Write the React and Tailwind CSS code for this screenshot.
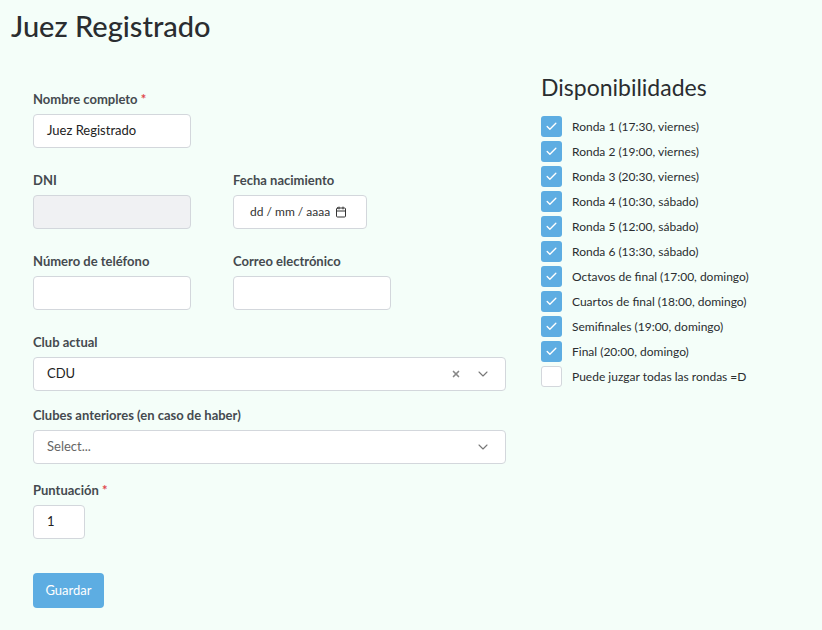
import React from 'react';
import { ChevronDown, X, Check, Calendar } from 'lucide-react';

const rondas = [
  ['Ronda 1 (17:30, viernes)', true],
  ['Ronda 2 (19:00, viernes)', true],
  ['Ronda 3 (20:30, viernes)', true],
  ['Ronda 4 (10:30, sábado)', true],
  ['Ronda 5 (12:00, sábado)', true],
  ['Ronda 6 (13:30, sábado)', true],
  ['Octavos de final (17:00, domingo)', true],
  ['Cuartos de final (18:00, domingo)', true],
  ['Semifinales (19:00, domingo)', true],
  ['Final (20:00, domingo)', true],
  ['Puede juzgar todas las rondas =D', false],
];

function Label({ children, required }) {
  return (
    <div className="text-[13px] font-bold text-[#454a4f] leading-[18px] mb-[6px]">
      {children}
      {required && <span className="text-[#e0474c]"> *</span>}
    </div>
  );
}

function Input({ className = '', disabled, children }) {
  return (
    <div className={`h-[34px] rounded-[4px] border border-[#d3d7dc] flex items-center px-[13px] text-[13px] text-[#222] ${disabled ? 'bg-[#f0f1f3]' : 'bg-white'} ${className}`}>
      {children}
    </div>
  );
}

export default function App() {
  return (
    <div className="min-h-[630px] bg-[#f4fef9] font-['Lato',sans-serif] text-[#222]">
      <h1 className="pl-[11px] pt-[8px] text-[29px] leading-[36px] font-medium text-[#2a2d30]">Juez Registrado</h1>

      <div className="flex pt-[46px]">
        {/* formulario */}
        <div className="pl-[33px] w-[507px]">
          <Label required>Nombre completo</Label>
          <Input className="w-[158px]">Juez Registrado</Input>

          <div className="flex mt-[23px]">
            <div className="w-[200px]">
              <Label>DNI</Label>
              <Input className="w-[158px]" disabled />
            </div>
            <div>
              <Label>Fecha nacimiento</Label>
              <Input className="w-[134px] justify-between pl-[16px] pr-[19px] text-[#333]">
                <span className="text-[12px]">dd / mm / aaaa</span>
                <Calendar className="w-[12px] h-[12px] text-[#333]" strokeWidth={2} />
              </Input>
            </div>
          </div>

          <div className="flex mt-[23px]">
            <div className="w-[200px]">
              <Label>Número de teléfono</Label>
              <Input className="w-[158px]" />
            </div>
            <div>
              <Label>Correo electrónico</Label>
              <Input className="w-[158px]" />
            </div>
          </div>

          <div className="mt-[23px]">
            <Label>Club actual</Label>
            <Input className="w-[473px] justify-between pr-[14px]">
              <span>CDU</span>
              <div className="flex items-center gap-[14px] text-[#888]">
                <X className="w-[10px] h-[10px]" strokeWidth={4} />
                <ChevronDown className="w-[16px] h-[16px] text-[#777]" strokeWidth={1.6} />
              </div>
            </Input>
          </div>

          <div className="mt-[15px]">
            <Label>Clubes anteriores (en caso de haber)</Label>
            <Input className="w-[473px] justify-between pr-[14px]">
              <span className="text-[#666]">Select...</span>
              <ChevronDown className="w-[16px] h-[16px] text-[#777]" strokeWidth={1.6} />
            </Input>
          </div>

          <div className="mt-[17px]">
            <Label required>Puntuación</Label>
            <Input className="w-[52px] text-[#4b2a5a]">1</Input>
          </div>

          <button className="mt-[34px] h-[35px] w-[71px] rounded-[4px] bg-[#5dade2] text-white text-[13px]">Guardar</button>
        </div>

        {/* disponibilidades */}
        <div className="pl-[34px]">
          <h2 className="text-[23px] leading-[28px] text-[#2a2d30] -mt-[17px] mb-[15px]">Disponibilidades</h2>
          <div className="flex flex-col gap-[4px]">
            {rondas.map(([txt, on]) => (
              <div key={txt} className="flex items-center h-[21px]">
                <div className={`w-[21px] h-[21px] rounded-[3px] flex items-center justify-center ${on ? 'bg-[#5dade2]' : 'bg-white border border-[#d3d7dc]'}`}>
                  {on && <Check className="w-[13px] h-[13px] text-white" strokeWidth={2.5} />}
                </div>
                <span className="ml-[10px] text-[12px] text-[#2a2d30]">{txt}</span>
              </div>
            ))}
          </div>
        </div>
      </div>
    </div>
  );
}
